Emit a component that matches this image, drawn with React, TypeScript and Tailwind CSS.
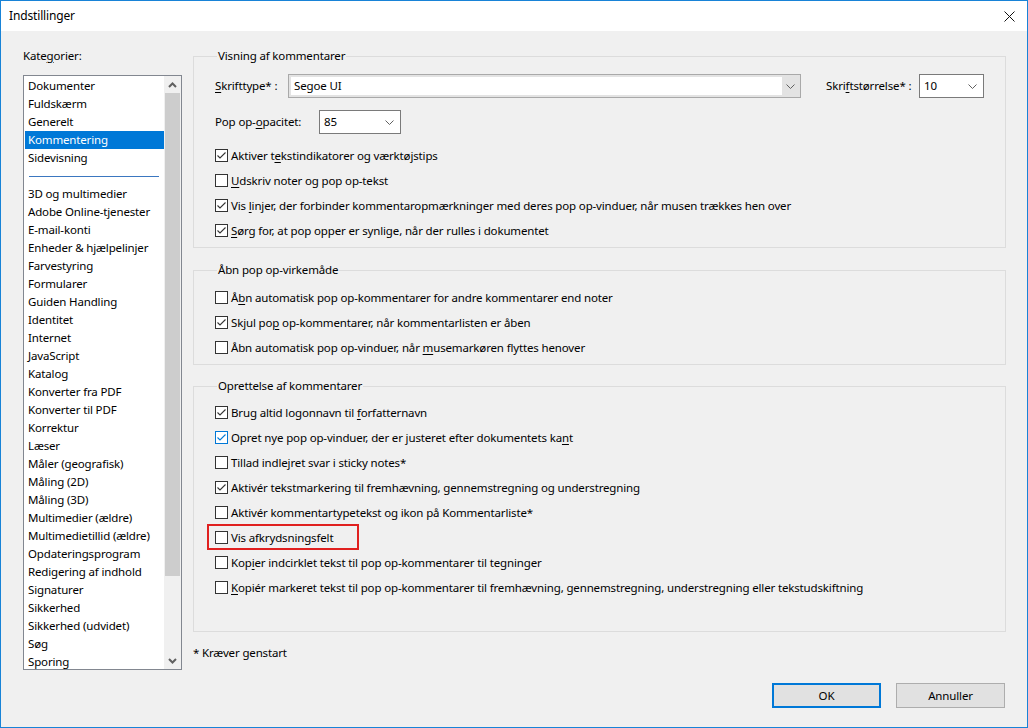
import React from 'react';

const categoriesTop = ['Dokumenter', 'Fuldskærm', 'Generelt', 'Kommentering', 'Sidevisning'];
const categoriesRest = [
  '3D og multimedier', 'Adobe Online-tjenester', 'E-mail-konti', 'Enheder & hjælpelinjer', 'Farvestyring',
  'Formularer', 'Guiden Handling', 'Identitet', 'Internet', 'JavaScript', 'Katalog', 'Konverter fra PDF',
  'Konverter til PDF', 'Korrektur', 'Læser', 'Måler (geografisk)', 'Måling (2D)', 'Måling (3D)',
  'Multimedier (ældre)', 'Multimedietillid (ældre)', 'Opdateringsprogram', 'Redigering af indhold',
  'Signaturer', 'Sikkerhed', 'Sikkerhed (udvidet)', 'Søg', 'Sporing',
];

// '&' marks the access key letter
function Ul({ t }: { t: string }) {
  const i = t.indexOf('&');
  if (i < 0) return <>{t}</>;
  return (
    <>
      {t.slice(0, i)}
      <span className="underline underline-offset-[2px]">{t[i + 1]}</span>
      {t.slice(i + 2)}
    </>
  );
}

function Chevron({ up }: { up?: boolean }) {
  return (
    <svg width="9" height="5" viewBox="0 0 9 5">
      <path d={up ? 'M0.5 4.5 L4.5 0.5 L8.5 4.5' : 'M0.5 0.5 L4.5 4.5 L8.5 0.5'} fill="none" stroke="#606060" strokeWidth="1" />
    </svg>
  );
}

function ScrollArrow({ up }: { up?: boolean }) {
  return (
    <div className="flex h-[17px] items-center justify-center">
      <svg width="9" height="6" viewBox="0 0 9 6">
        <path d={up ? 'M1 5 L4.5 1.5 L8 5' : 'M1 1 L4.5 4.5 L8 1'} fill="none" stroke="#606060" strokeWidth="2" />
      </svg>
    </div>
  );
}

function Box({ checked, hot }: { checked?: boolean; hot?: boolean }) {
  return (
    <span className={`flex h-[13px] w-[13px] shrink-0 items-center justify-center border bg-white ${hot ? 'border-[#0078d7]' : 'border-[#333333]'}`}>
      {checked && (
        <svg width="11" height="11" viewBox="0 0 11 11">
          <path d="M1.5 5.5 L4 8 L9.5 2.5" fill="none" stroke={hot ? '#0078d7' : '#333333'} strokeWidth="1.1" />
        </svg>
      )}
    </span>
  );
}

function Check({ label, checked, hot, marked }: { label: string; checked?: boolean; hot?: boolean; marked?: boolean }) {
  return (
    <div className="relative flex h-[25px] items-center gap-[3px] whitespace-nowrap">
      <Box checked={checked} hot={hot} />
      <span><Ul t={label} /></span>
      {marked && <span className="absolute -left-[8px] -top-[1px] h-[26px] w-[152px] border-2 border-[#e0201f]" />}
    </div>
  );
}

function Group({ title, className, children }: { title: string; className?: string; children: React.ReactNode }) {
  return (
    <fieldset className={`w-[813px] border border-[#dcdcdc] pl-[21px] ${className ?? ''}`}>
      <legend className="ml-[2px] h-[16px] px-[1px] leading-[16px]">{title}</legend>
      {children}
    </fieldset>
  );
}

export default function App() {
  return (
    <div
      className="flex h-[728px] w-[1028px] flex-col border border-[#1883d7] bg-[#f0f0f0] text-[11.5px] leading-[16px] tracking-[-0.15px] text-black"
      style={{ fontFamily: '"Segoe UI", "Noto Sans", sans-serif' }}
    >
      {/* title bar */}
      <div className="flex h-[30px] shrink-0 items-center justify-between bg-white pl-[8px] pr-[12px]">
        <span className="text-[12px]">Indstillinger</span>
        <svg width="11" height="11" viewBox="0 0 11 11">
          <path d="M0.5 0.5 L10.5 10.5 M10.5 0.5 L0.5 10.5" stroke="#111" strokeWidth="1" />
        </svg>
      </div>

      <div className="flex flex-1 pt-[17px]">
        {/* categories */}
        <div className="w-[181px] shrink-0 pl-[22px]">
          <div className="h-[16px]">Kate<span className="underline underline-offset-[2px]">g</span>orier:</div>
          <div className="mt-[11px] flex h-[595px] w-[159px] border border-[#828790] bg-white">
            <div className="flex-1 py-[1px] pl-[1px]">
              {categoriesTop.map((c) => (
                <div
                  key={c}
                  className={`flex h-[18px] items-center whitespace-nowrap px-[3px] ${c === 'Kommentering' ? 'bg-[#0078d7] text-white' : ''}`}
                >
                  {c}
                </div>
              ))}
              <div className="flex h-[18px] items-center">
                <div className="ml-[4px] h-px w-[130px] bg-[#3b77c0]" />
              </div>
              {categoriesRest.map((c) => (
                <div key={c} className="flex h-[18px] items-center whitespace-nowrap px-[3px]">
                  {c}
                </div>
              ))}
            </div>
            <div className="flex w-[17px] flex-col bg-[#f0f0f0]">
              <ScrollArrow up />
              <div className="mx-[1px] h-[483px] bg-[#cdcdcd]" />
              <div className="flex-1" />
              <ScrollArrow />
            </div>
          </div>
        </div>

        {/* settings */}
        <div className="ml-[11px] flex flex-col">
          <Group title="Visning af kommentarer" className="pb-[4px]">
            <div className="mt-[10px] flex h-[24px] items-center">
              <span className="w-[73px] whitespace-nowrap"><Ul t="&Skrifttype* :" /></span>
              <div className="flex h-[24px] w-[513px] border border-[#a9a9a9] bg-[#e3e3e3] p-[2px]">
                <div className="flex flex-1 items-center bg-white pl-[3px]">Segoe UI</div>
                <div className="flex w-[16px] items-center justify-center"><Chevron /></div>
              </div>
              <span className="ml-[25px] w-[93px] whitespace-nowrap"><Ul t="Skri&ftstørrelse* :" /></span>
              <div className="flex h-[24px] w-[65px] items-center justify-between border border-[#7a7a7a] bg-white pl-[4px] pr-[6px]">
                <span>10</span>
                <Chevron />
              </div>
            </div>
            <div className="mt-[12px] flex h-[24px] items-center">
              <span className="w-[104px] whitespace-nowrap"><Ul t="Pop op-&opacitet:" /></span>
              <div className="flex h-[24px] w-[82px] items-center justify-between border border-[#7a7a7a] bg-white pl-[4px] pr-[6px]">
                <span>85</span>
                <Chevron />
              </div>
            </div>
            <div className="mt-[9px]">
              <Check checked label="Aktiver t&ekstindikatorer og værktøjstips" />
              <Check label="&Udskriv noter og pop op-tekst" />
              <Check checked label="Vis &linjer, der forbinder kommentaropmærkninger med deres pop op-vinduer, når musen trækkes hen over" />
              <Check checked label="&Sørg for, at pop opper er synlige, når der rulles i dokumentet" />
            </div>
          </Group>

          <Group title="Åbn pop op-virkemåde" className="mt-[14px] pb-[4px]">
            <div className="mt-[7px]">
              <Check label="Å&bn automatisk pop op-kommentarer for andre kommentarer end noter" />
              <Check checked label="Skjul po&p op-kommentarer, når kommentarlisten er åben" />
              <Check label="Åbn automatisk pop op-vinduer, når &musemarkøren flyttes henover" />
            </div>
          </Group>

          <Group title="Oprettelse af kommentarer" className="mt-[13px] pb-[31px]">
            <div className="mt-[6px]">
              <Check checked label="Brug altid logonnavn til &forfatternavn" />
              <Check checked hot label="Opret nye pop op-vinduer, der er justeret efter dokumentets ka&nt" />
              <Check label="Tillad indlejret svar i sticky notes*" />
              <Check checked label="Aktivér tekstmarkering til fremhævning, gennemstregning og understregning" />
              <Check label="Aktivér kommentartypetekst og ikon på Kommentarliste*" />
              <Check marked label="Vis afkrydsningsfelt" />
              <Check label="Kop&ier indcirklet tekst til pop op-kommentarer til tegninger" />
              <Check label="&Kopiér markeret tekst til pop op-kommentarer til fremhævning, gennemstregning, understregning eller tekstudskiftning" />
            </div>
          </Group>

          <div className="mt-[13px] h-[16px]">* Kræver genstart</div>

          <div className="mt-[22px] flex w-[812px] justify-end gap-[15px]">
            <button className="h-[25px] w-[109px] border-2 border-[#0078d7] bg-[#e1e1e1]">OK</button>
            <button className="h-[25px] w-[109px] border border-[#adadad] bg-[#e1e1e1]">Annuller</button>
          </div>
        </div>
      </div>
    </div>
  );
}
